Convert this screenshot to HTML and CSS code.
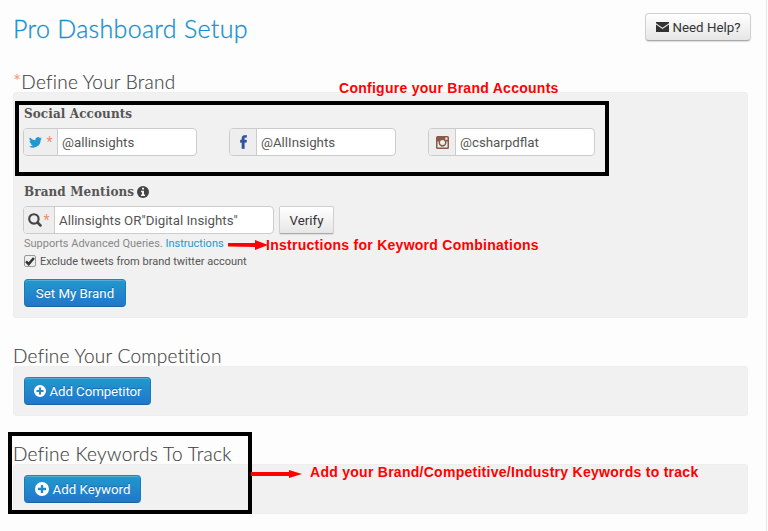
FILE: index.html
```html
<!DOCTYPE html>
<html lang="en">
<head>
<meta charset="utf-8">
<title>Pro Dashboard Setup</title>
<link rel="stylesheet" href="styles.css">
</head>
<body>
<svg class="defs" width="0" height="0">
  <symbol id="plus" viewBox="0 0 12 12"><path fill="currentColor" fill-rule="evenodd" d="M6 0a6 6 0 1 0 0 12A6 6 0 0 0 6 0ZM5 2.500h2V5h2.500v2H7v2.500H5V7H2.500V5H5Z"/></symbol>
</svg>
<main class="page">
  <header class="top">
    <h1>Pro Dashboard Setup</h1>
    <button class="btn help"><svg width="13" height="10" viewBox="0 0 13 10"><path fill="#333" d="M0 0h13v1.200L6.500 5.800 0 1.200ZM0 2.600l6.500 4.500L13 2.600V10H0Z"/></svg><span>Need Help?</span></button>
  </header>

  <section class="brand">
    <h2><span class="star">*</span>Define Your Brand</h2>
    <div class="panel">
      <h3>Social Accounts</h3>
      <div class="accounts">
        <div class="field">
          <span class="addon wide"><svg width="13" height="11" viewBox="0 0 24 20"><path fill="#2398d0" d="M24 2.400a10 10 0 0 1-2.800.8A5 5 0 0 0 23.300.4a10 10 0 0 1-3.100 1.200A4.900 4.900 0 0 0 11.800 6 14 14 0 0 1 1.700.9a4.900 4.900 0 0 0 1.500 6.600 5 5 0 0 1-2.200-.6 4.900 4.900 0 0 0 3.900 4.900 5 5 0 0 1-2.200.1 4.900 4.900 0 0 0 4.600 3.400A10 10 0 0 1 0 17.300 14 14 0 0 0 21.500 4.900 10 10 0 0 0 24 2.400Z"/></svg><i class="star">*</i></span>
          <span class="value">@allinsights</span>
        </div>
        <div class="field">
          <span class="addon"><svg width="7" height="14" viewBox="0 0 7 14"><path fill="#34539b" stroke="#34539b" stroke-width=".4" d="M6.700.2v2.200H5.400c-.8 0-1 .4-1 1V5h2.300l-.3 2.400h-2v6.400H1.900V7.400H.2V5h1.700V3.200C1.900 1.200 3.100.2 4.900.2Z"/></svg></span>
          <span class="value">@AllInsights</span>
        </div>
        <div class="field">
          <span class="addon"><svg width="13" height="13" viewBox="0 0 13 13"><path fill="#8a5a48" fill-rule="evenodd" d="M1.500 0h10A1.500 1.500 0 0 1 13 1.500v10a1.500 1.500 0 0 1-1.500 1.500h-10A1.500 1.500 0 0 1 0 11.500v-10A1.500 1.500 0 0 1 1.500 0ZM9.300 1.500v2.200h2.200V1.500ZM1.500 5.500v6h10v-6h-1.200a4 4 0 1 1-7.600 0ZM6.500 4a2.500 2.500 0 1 0 0 5 2.500 2.500 0 0 0 0-5Z"/></svg></span>
          <span class="value">@csharpdflat</span>
        </div>
      </div>
      <h3 class="mentions"><span>Brand Mentions</span><svg width="12" height="12" viewBox="0 0 12 12"><circle cx="6" cy="6" r="6" fill="#444"/><path fill="#f1f1f1" d="M5 1.800h2v1.700H5ZM4 4.700h3v3.700h1V10H4V8.400h1V6.200H4Z"/></svg></h3>
      <div class="query">
        <div class="field">
          <span class="addon search"><svg width="14" height="14" viewBox="0 0 14 14"><circle cx="5.900" cy="5.900" r="4.700" fill="none" stroke="#444" stroke-width="2.100"/><path stroke="#444" stroke-width="2.500" stroke-linecap="round" d="m9.500 9.500 3 3"/></svg><i class="star">*</i></span>
          <span class="value">Allinsights OR"Digital Insights"</span>
        </div>
        <button class="btn verify">Verify</button>
      </div>
      <p class="hint">Supports Advanced Queries. <a>Instructions</a></p>
      <label class="exclude"><span class="box"><svg width="10" height="9" viewBox="0 0 10 9"><path fill="none" stroke="#333" stroke-width="2.500" d="m1 4.300 2.700 2.800L8.900 1"/></svg></span><span>Exclude tweets from brand twitter account</span></label>
      <button class="btn primary set">Set My Brand</button>
    </div>
  </section>

  <section class="group">
    <h2 class="competition">Define Your Competition</h2>
    <div class="panel small"><button class="btn primary comp"><svg width="12" height="12"><use href="#plus"/></svg><span>Add Competitor</span></button></div>
  </section>

  <section class="group">
    <h2 class="keywords">Define Keywords To Track</h2>
    <div class="panel small"><button class="btn primary key"><svg width="14" height="14"><use href="#plus"/></svg><span>Add Keyword</span></button></div>
  </section>
</main>

<div class="frame frame-accounts"></div>
<div class="frame frame-keywords"></div>
<div class="note note-accounts">Configure your Brand Accounts</div>
<svg class="arrow arrow-query" width="40" height="10" viewBox="0 0 40 10"><path fill="red" d="M0 3h27V0l13 5-13 5V7L0 6.500Z"/></svg>
<div class="note note-query">Instructions for Keyword Combinations</div>
<svg class="arrow arrow-keywords" width="51" height="8" viewBox="0 0 51 8"><path fill="red" d="M0 2h38V0l13 4-13 4V6H0Z"/></svg>
<div class="note note-keywords">Add your Brand/Competitive/Industry Keywords to track</div>
</body>
</html>
```
FILE: styles.css
```css
* { box-sizing: border-box; }
body {
  margin: 0;
  width: 768px;
  height: 531px;
  overflow: hidden;
  position: relative;
  background: #fdfdfd;
  color: #555;
  font-family: Roboto, "Liberation Sans", sans-serif;
  font-size: 13.3px;
}
.defs { display: block; height: 0; }
h1, h2, h3, p { margin: 0; font-weight: 400; }
span, h1, h2, h3 { white-space: nowrap; }
.page { width: 767px; height: 531px; padding: 13px 18px 0 13px; border-right: 1px solid #e6e6e6; }
.top { display: flex; justify-content: space-between; height: 59px; }
h1, h2 { font-family: Lato, "Open Sans", sans-serif; font-weight: 300; }
h1 { color: #1590cc; font-size: 25px; line-height: 30px; letter-spacing: .3px; -webkit-text-stroke: .3px; }
h2 { font-size: 19px; line-height: 20px; height: 20px; color: #444; letter-spacing: .25px; -webkit-text-stroke: .15px; }
h2.keywords { letter-spacing: .3px; }
h3 { font-family: "DejaVu Serif", serif; font-size: 12px; line-height: 18px; height: 18px; font-weight: 700; color: #555; padding-left: 1px; letter-spacing: .1px; }
.star { color: #f58a70; font-style: normal; }
.panel { height: 226px; background: #f1f1f1; border: 1px solid #eee; border-radius: 3px; padding: 12px 10px 0 9px; }
.panel.small { height: 50px; padding-top: 10px; }
.group { margin-top: 28px; }
.accounts { display: flex; gap: 32px; padding-top: 5px; }
.accounts .field { width: 167px; }
.accounts .field:first-child { width: 174px; }
.field { display: flex; height: 28px; border: 1px solid #ccc; border-radius: 4px; background: #fff; overflow: hidden; }
.addon { width: 27px; flex: none; background: #eee; border-right: 1px solid #ccc; display: flex; align-items: center; justify-content: center; }
.addon.wide { width: 34px; gap: 4px; padding-left: 1px; }
.addon.search { width: 31px; gap: 1px; padding-left: 0; }
.addon .star { font-size: 14px; line-height: 20px; }
.value { line-height: 27px; padding-left: 4px; }
.mentions { display: flex; align-items: center; gap: 3px; margin-top: 27px; }
.query { display: flex; gap: 5px; padding-top: 5px; }
.query .field { width: 251px; }
.btn { display: flex; align-items: center; justify-content: center; gap: 4px; height: 28px; padding: 0; margin: 0; border: 1px solid #d0d0d0; border-bottom-color: #aaa; border-radius: 4px; background: linear-gradient(#fff, #e6e6e6); color: #333; font: inherit; box-shadow: 0 1px 1px #ddd; }
.help { width: 106px; margin-right: -3px; }
.verify { width: 55px; border-radius: 2px; }
.hint { font-size: 11px; line-height: 18px; height: 20px; color: #888; padding: 1px 0 0 1px; }
.hint a { color: #2398d0; }
.exclude { display: flex; align-items: center; gap: 4px; height: 14px; margin-left: 1px; font-size: 11px; }
.box { width: 12px; height: 12px; border: 1px solid #999; border-radius: 2px; background: #eee; display: flex; align-items: center; justify-content: center; }
.primary { margin-left: 1px; color: #fff; border-color: #1c84b8 #1c79b5 #1a62a0; background: linear-gradient(#2199cc, #2177cc); box-shadow: inset 0 1px #58acd8; text-shadow: 0 -1px #1767a5; }
.set { width: 102px; margin-top: 11px; }
.comp { width: 127px; letter-spacing: -.1px; }
.key { width: 117px; }
.frame { position: absolute; border: 4px solid #000; }
.frame-accounts { left: 15px; top: 101px; width: 594px; height: 75px; }
.frame-keywords { left: 8px; top: 432px; width: 244px; height: 82px; }
.note { position: absolute; color: red; font: 700 14px/16px "Liberation Sans", sans-serif; letter-spacing: .27px; white-space: nowrap; }
.note-accounts { left: 339px; top: 80px; }
.note-query { left: 266px; top: 237px; }
.note-keywords { left: 310px; top: 464px; }
.arrow { position: absolute; }
.arrow-query { left: 228px; top: 240px; }
.arrow-keywords { left: 251px; top: 470px; }
```
